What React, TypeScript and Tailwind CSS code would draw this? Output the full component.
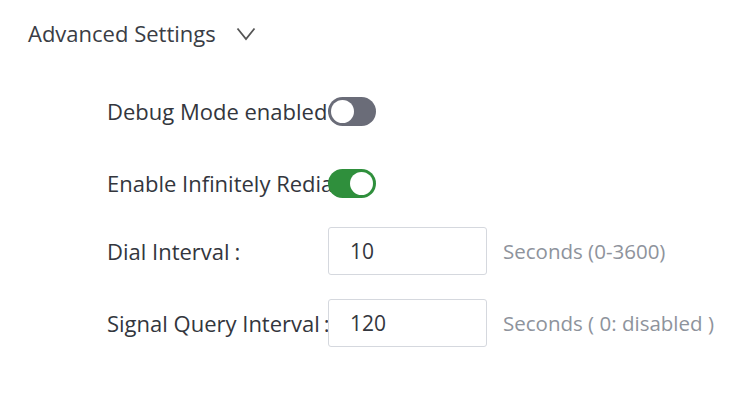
import React from 'react';

const FONT = "font-['Open_Sans','Noto_Sans',sans-serif]";

function Toggle({ on }: { on: boolean }) {
  return (
    <div
      className={`relative z-10 flex h-[29px] w-[48px] shrink-0 items-center rounded-full p-[3px] ${
        on ? 'justify-end bg-[#2f8f3c]' : 'justify-start bg-[#6a6c78]'
      }`}
    >
      <div className="h-[23px] w-[23px] rounded-full bg-white" />
    </div>
  );
}

function Label({ children }: { children: React.ReactNode }) {
  return (
    <div className="w-[221px] shrink-0 whitespace-nowrap text-[22px] text-[#33363d]">
      {children}
    </div>
  );
}

export default function App() {
  const [debug, setDebug] = React.useState(false);
  const [redial, setRedial] = React.useState(true);

  return (
    <div className={`h-[394px] w-[732px] bg-white ${FONT}`}>
      <div className="flex items-center gap-[20px] pl-[28px] pt-[17px]">
        <span className="text-[22px] text-[#3a3d45]">Advanced Settings</span>
        <svg width="20" height="14" viewBox="0 0 20 14" fill="none" stroke="#555" strokeWidth="1.8">
          <path d="M1.5 1.5 L10 12 L18.5 1.5" />
        </svg>
      </div>

      <div className="flex flex-col pl-[107px] pt-[37px]">
        <div className="flex h-[48px] items-center" onClick={() => setDebug(!debug)}>
          <Label>Debug Mode enabled</Label>
          <Toggle on={debug} />
        </div>
        {/* label runs under the switch, as in the original page */}
        <div className="mt-[24px] flex h-[48px] items-center" onClick={() => setRedial(!redial)}>
          <Label>Enable Infinitely Redial</Label>
          <Toggle on={redial} />
        </div>
        <div className="mt-[20px] flex h-[48px] items-center">
          <Label>
            Dial Interval<span className="ml-[5px]">:</span>
          </Label>
          <input
            defaultValue="10"
            className="h-[48px] w-[159px] rounded-[3px] border border-[#d5d8de] px-[21px] text-[21px] text-[#33363d] outline-none"
          />
          <span className="ml-[16px] text-[20.5px] text-[#8e939c]">Seconds (0-3600)</span>
        </div>
        <div className="mt-[24px] flex h-[48px] items-center">
          <Label>
            Signal Query Interval<span className="ml-[4px]">:</span>
          </Label>
          <input
            defaultValue="120"
            className="h-[48px] w-[159px] rounded-[3px] border border-[#d5d8de] px-[21px] text-[21px] text-[#33363d] outline-none"
          />
          <span className="ml-[16px] text-[20.5px] text-[#8e939c]">Seconds ( 0: disabled )</span>
        </div>
      </div>
    </div>
  );
}
